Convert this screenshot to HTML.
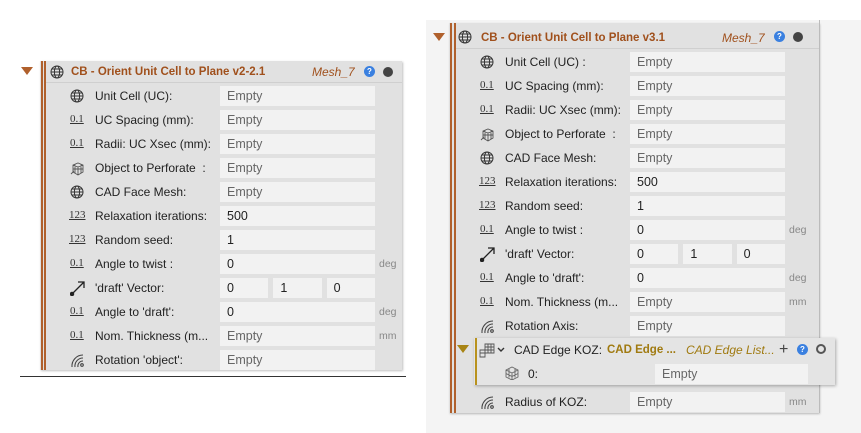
<!DOCTYPE html>
<html><head><meta charset="utf-8"><style>
*{margin:0;padding:0;box-sizing:border-box}
body{width:861px;height:433px;background:#fff;position:relative;overflow:hidden;font-family:"Liberation Sans",Arial,sans-serif;font-size:12px;color:#222}
.a{position:absolute}
.panel{background:#e1e1e1;box-shadow:1px 1px 2px rgba(0,0,0,.25)}
.vl{position:absolute;width:1.5px;background:#b0602c}
.tri{position:absolute;width:0;height:0;border-left:6px solid transparent;border-right:6px solid transparent;border-top:8px solid #b0602c}
.hd{position:absolute;color:#a0501c;font-weight:bold;font-size:11.5px}
.mesh{position:absolute;color:#a0501c;font-style:italic;font-size:12px}
.q{position:absolute;width:11px;height:11px;border-radius:50%;background:#3a80e0;color:#fff;font-size:8px;font-weight:bold;text-align:center;line-height:11px}
.dot{position:absolute;width:10px;height:10px;border-radius:50%;background:#444}
.lb{position:absolute;font-size:12px;color:#222;white-space:nowrap}
.f{position:absolute;height:20px;background:#f2f2f2;padding-left:7px;line-height:20px;font-size:12.5px;color:#222}
.e{color:#666}
.u{position:absolute;font-size:10.5px;color:#888}
.ic{position:absolute;font-family:"Liberation Serif",serif;font-size:11px;line-height:12px;text-decoration:underline;color:#333}
svg{position:absolute}
</style></head><body>

<!-- LEFT -->
<div class="a" style="left:20px;top:376px;width:386px;height:1px;background:#333"></div>
<div class="tri" style="left:21px;top:67px"></div>
<div class="a panel" style="left:40px;top:61px;width:362px;height:309px"></div>
<div class="vl" style="left:41px;top:61px;height:309px"></div>
<div class="vl" style="left:44px;top:61px;height:309px"></div>
<div class="a" style="left:46px;top:82px;width:356px;height:1px;background:#cfcfcf"></div>
<svg style="left:50px;top:65px" width="14" height="14" viewBox="0 0 14 14" fill="none" stroke="#333" stroke-width="1"><circle cx="7" cy="7" r="6"/><ellipse cx="7" cy="7" rx="2.6" ry="6"/><path d="M1 7h12M2 4h10M2 10h10"/></svg>
<div class="hd" style="left:71px;top:66px">CB - Orient Unit Cell to Plane v2-2.1</div>
<div class="mesh" style="left:312px;top:65px">Mesh_7</div>
<div class="q" style="left:364px;top:66px">?</div>
<div class="dot" style="left:383px;top:67px"></div>

<!-- RIGHT outer -->
<div class="a" style="left:426px;top:20px;width:435px;height:413px;background:#f4f4f4"></div>
<div class="tri" style="left:433px;top:33px"></div>
<div class="a panel" style="left:449px;top:23px;width:370px;height:390px"></div>
<div class="a" style="left:819px;top:20px;width:1px;height:393px;background:#bbb"></div>
<div class="vl" style="left:450px;top:23px;height:390px"></div>
<div class="vl" style="left:454px;top:23px;height:390px"></div>
<div class="a" style="left:456px;top:48px;width:363px;height:1px;background:#cfcfcf"></div>
<svg style="left:458px;top:30px" width="14" height="14" viewBox="0 0 14 14" fill="none" stroke="#333" stroke-width="1"><circle cx="7" cy="7" r="6"/><ellipse cx="7" cy="7" rx="2.6" ry="6"/><path d="M1 7h12M2 4h10M2 10h10"/></svg>
<div class="hd" style="left:481px;top:32px">CB - Orient Unit Cell to Plane v3.1</div>
<div class="mesh" style="left:722px;top:31px">Mesh_7</div>
<div class="q" style="left:774px;top:31px">?</div>
<div class="dot" style="left:793px;top:32px"></div>

<div id="rows"></div>
<script>
function globe(x,y){return `<svg style="left:${x}px;top:${y}px" width="14" height="14" viewBox="0 0 14 14" fill="none" stroke="#333" stroke-width="1"><circle cx="7" cy="7" r="6"/><ellipse cx="7" cy="7" rx="2.6" ry="6"/><path d="M1 7h12M2 4h10M2 10h10"/></svg>`}
function num(x,y,t){return `<div class="ic" style="left:${x}px;top:${y}px">${t}</div>`}
function obj(x,y){return `<svg style="left:${x}px;top:${y}px" width="15" height="15" viewBox="0 0 15 15" fill="none" stroke="#555" stroke-width=".9"><path d="M3 4l5-2 5 2v7l-5 3-5-3z M3 4l5 2 5-2 M8 6v8 M5 3l0 9 M11 3v9 M3 8l10 0"/><path d="M1 13l3-3"/></svg>`}
function vec(x,y){return `<svg style="left:${x}px;top:${y}px" width="16" height="16" viewBox="0 0 16 16" fill="none" stroke="#222" stroke-width="1.3"><path d="M2 14L14 2M8 2h6v6"/><circle cx="2" cy="14" r="1.6" fill="#222"/></svg>`}
function rot(x,y){return `<svg style="left:${x}px;top:${y}px" width="16" height="16" viewBox="0 0 16 16" fill="none" stroke="#444" stroke-width="1.1"><path d="M2 15A11 11 0 0 1 13 3M5 15A8 8 0 0 1 13 6M8 15A5 5 0 0 1 13 9"/><circle cx="12" cy="13" r="1.3"/></svg>`}
function icon(t,x,c){const y=c-7;if(t=='g')return globe(x,y);if(t=='d')return num(x,c-7,'0.1');if(t=='n')return num(x-1,c-7,'123');if(t=='o')return obj(x,y);if(t=='v')return vec(x,c-8);if(t=='r')return rot(x,c-8);return ''}
const L=[['g','Unit Cell (UC):','Empty'],['d','UC Spacing (mm):','Empty'],['d','Radii: UC Xsec (mm):','Empty'],['o','Object to Perforate&nbsp; :','Empty'],['g','CAD Face Mesh:','Empty'],['n','Relaxation iterations:','500'],['n','Random seed:','1'],['d','Angle to twist :','0','deg'],['v',"'draft' Vector:",'V'],['d',"Angle to 'draft':",'0','deg'],['d','Nom. Thickness (m...','Empty','mm']];
const LL=L.concat([['r',"Rotation 'object':",'Empty']]);
const RR=L.map(r=>r.slice());RR[0][1]='Unit Cell (UC) :';RR.push(['r','Rotation Axis:','Empty']);
let h='';
function build(rows,ix,lx,fx,fw,ux,c0){rows.forEach((r,i)=>{const c=c0+i*24;h+=icon(r[0],ix,c);h+=`<div class="lb" style="left:${lx}px;top:${c-7}px">${r[1]}</div>`;
if(r[2]=='V'){const w=(fw-10)/3;['0','1','0'].forEach((v,k)=>{h+=`<div class="f" style="left:${fx+k*(w+5)}px;top:${c-10}px;width:${w}px">${v}</div>`})}
else h+=`<div class="f" style="left:${fx}px;top:${c-10}px;width:${fw}px">${r[2]=='Empty'?'<span class="e">Empty</span>':r[2]}</div>`;
if(r[3])h+=`<div class="u" style="left:${ux}px;top:${c-6}px">${r[3]}</div>`;});}
build(LL,70,95,220,155,379,96);
build(RR,480,505,630,155,789,62);
document.getElementById('rows').innerHTML=h;
</script>

<!-- KOZ subpanel -->
<div class="a" style="left:474px;top:338px;width:361px;height:47px;background:#e4e4e4;box-shadow:1px 1px 3px rgba(0,0,0,.3)"></div>
<div class="a" style="left:475px;top:338px;width:2px;height:47px;background:#b8921e"></div>
<div class="tri" style="left:457px;top:345px;border-top-color:#a88414"></div>
<svg style="left:479px;top:342px" width="16" height="16" viewBox="0 0 16 16" fill="none" stroke="#555" stroke-width=".9"><path d="M6 2h9v9H6z M6 5h9 M6 8h9 M9 2v9 M12 2v9 M1 8h5v7H1z M1 11h5"/></svg>
<svg style="left:497px;top:347px" width="8" height="6" viewBox="0 0 8 6" fill="none" stroke="#333" stroke-width="1.4"><path d="M1 1l3 3 3-3"/></svg>
<div class="lb" style="left:514px;top:343px">CAD Edge KOZ:</div>
<div class="lb" style="left:607px;top:344px;color:#a07a10;font-weight:bold;font-size:11.5px">CAD Edge ...</div>
<div class="lb" style="left:686px;top:343px;color:#a07a10;font-style:italic">CAD Edge List...</div>
<div class="lb" style="left:779px;top:342px;font-size:16px;color:#444;line-height:16px">+</div>
<div class="q" style="left:797px;top:344px">?</div>
<div class="a" style="left:816px;top:344px;width:10px;height:10px;border-radius:50%;border:2px solid #555"></div>
<svg style="left:505px;top:366px" width="14" height="14" viewBox="0 0 14 14" fill="none" stroke="#666" stroke-width=".9"><path d="M1 4l6-3 6 3v7l-6 3-6-3z M1 4l6 3 6-3 M7 7v7 M4 2.5v9 M10 2.5v9 M1 7.5l6 3 6-3"/></svg>
<div class="lb" style="left:528px;top:367px">0:</div>
<div class="f" style="left:655px;top:364px;width:153px"><span class="e">Empty</span></div>

<!-- Radius row -->
<svg style="left:480px;top:394px" width="16" height="16" viewBox="0 0 16 16" fill="none" stroke="#444" stroke-width="1.1"><path d="M2 15A11 11 0 0 1 13 3M5 15A8 8 0 0 1 13 6M8 15A5 5 0 0 1 13 9"/><circle cx="12" cy="13" r="1.3"/></svg>
<div class="lb" style="left:505px;top:395px">Radius of KOZ:</div>
<div class="f" style="left:630px;top:392px;width:155px"><span class="e">Empty</span></div>
<div class="u" style="left:789px;top:396px">mm</div>
</body></html>
